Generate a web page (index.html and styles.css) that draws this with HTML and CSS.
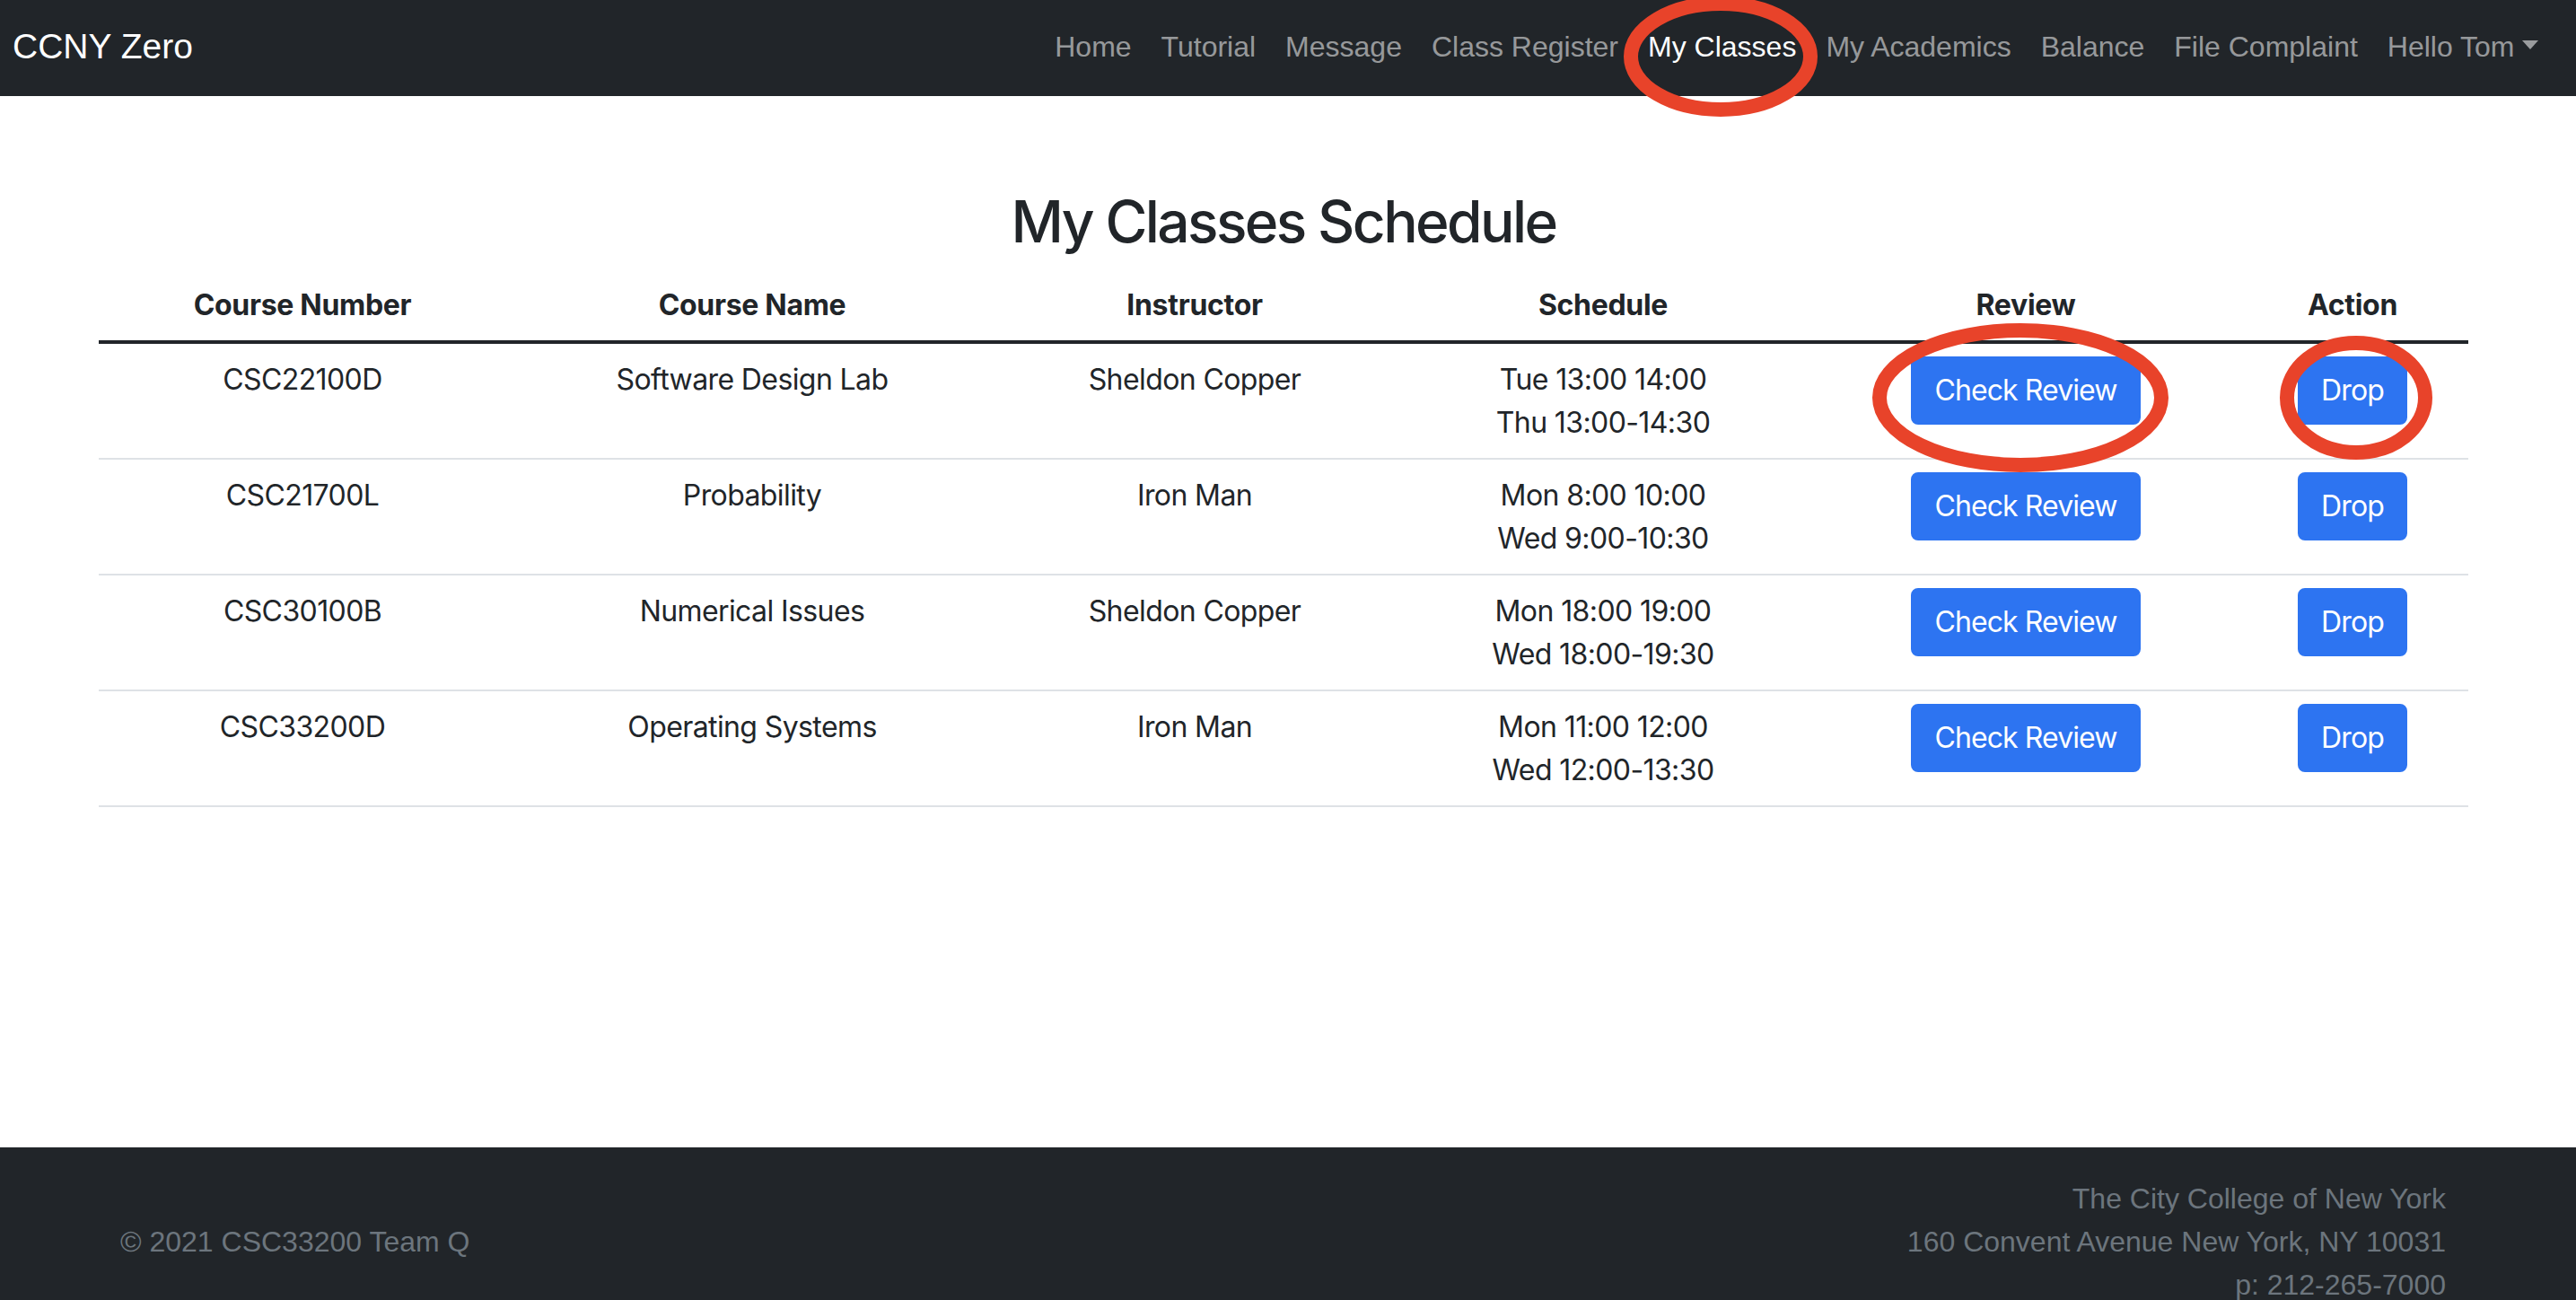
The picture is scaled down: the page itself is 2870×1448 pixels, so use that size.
FILE: index.html
```html
<!DOCTYPE html>
<html lang="en">
<head>
<meta charset="utf-8">
<title>My Classes Schedule</title>
<link rel="stylesheet" href="styles.css">
</head>
<body>
<nav class="navbar">
  <a class="brand" href="#">CCNY Zero</a>
  <ul class="nav">
    <li><a class="nav-link" href="#">Home</a></li>
    <li><a class="nav-link" href="#">Tutorial</a></li>
    <li><a class="nav-link" href="#">Message</a></li>
    <li><a class="nav-link" href="#">Class Register</a></li>
    <li><a class="nav-link active" href="#">My Classes</a></li>
    <li><a class="nav-link" href="#">My Academics</a></li>
    <li><a class="nav-link" href="#">Balance</a></li>
    <li><a class="nav-link" href="#">File Complaint</a></li>
    <li><a class="nav-link dropdown-toggle" href="#">Hello Tom</a></li>
  </ul>
</nav>

<main class="content">
  <h2 class="title">My Classes Schedule</h2>
  <table class="schedule">
    <colgroup>
      <col class="c-num"><col class="c-name"><col class="c-inst"><col class="c-sched"><col class="c-review"><col class="c-action">
    </colgroup>
    <thead>
      <tr><th>Course Number</th><th>Course Name</th><th>Instructor</th><th>Schedule</th><th>Review</th><th>Action</th></tr>
    </thead>
    <tbody>
      <tr>
        <td>CSC22100D</td><td>Software Design Lab</td><td>Sheldon Copper</td>
        <td>Tue 13:00 14:00<br>Thu 13:00-14:30</td>
        <td><button class="btn">Check Review</button></td>
        <td><button class="btn">Drop</button></td>
      </tr>
      <tr>
        <td>CSC21700L</td><td>Probability</td><td>Iron Man</td>
        <td>Mon 8:00 10:00<br>Wed 9:00-10:30</td>
        <td><button class="btn">Check Review</button></td>
        <td><button class="btn">Drop</button></td>
      </tr>
      <tr>
        <td>CSC30100B</td><td>Numerical Issues</td><td>Sheldon Copper</td>
        <td>Mon 18:00 19:00<br>Wed 18:00-19:30</td>
        <td><button class="btn">Check Review</button></td>
        <td><button class="btn">Drop</button></td>
      </tr>
      <tr>
        <td>CSC33200D</td><td>Operating Systems</td><td>Iron Man</td>
        <td>Mon 11:00 12:00<br>Wed 12:00-13:30</td>
        <td><button class="btn">Check Review</button></td>
        <td><button class="btn">Drop</button></td>
      </tr>
    </tbody>
  </table>
</main>

<footer class="footer">
  <div class="footer-inner">
    <p class="copy">© 2021 CSC33200 Team Q</p>
    <address class="address">
      The City College of New York<br>
      160 Convent Avenue New York, NY 10031<br>
      p: 212-265-7000
    </address>
  </div>
</footer>

<svg class="annotations" width="2870" height="1448" viewBox="0 0 2870 1448" aria-hidden="true">
  <ellipse cx="1917" cy="63" rx="100" ry="59" />
  <ellipse cx="2251" cy="443" rx="157" ry="75" />
  <ellipse cx="2625" cy="443" rx="77" ry="61" />
</svg>
</body>
</html>
```

FILE: styles.css
```css
* { box-sizing: border-box; }

html, body {
  margin: 0;
  padding: 0;
  background: #ffffff;
}

body {
  position: relative;
  font-family: Inter, "Noto Sans", sans-serif;
  color: #212529;
  overflow: hidden;
}

/* ---------- navbar ---------- */
.navbar {
  height: 107px;
  background: #212529;
  display: flex;
  align-items: center;
  justify-content: space-between;
  padding: 0 26px 4px 14px;
  font-family: "Liberation Sans", Arial, sans-serif;
}

.brand {
  color: #ffffff;
  font-size: 39px;
  line-height: 60px;
  text-decoration: none;
}

.nav {
  display: flex;
  list-style: none;
  margin: 0;
  padding: 0;
}

.nav-link {
  display: block;
  padding: 0 16.5px;
  font-size: 32px;
  line-height: 48px;
  color: rgba(255, 255, 255, 0.55);
  text-decoration: none;
}

.nav-link.active {
  color: #ffffff;
}

.dropdown-toggle::after {
  content: "";
  display: inline-block;
  margin-left: 8px;
  vertical-align: 8px;
  border-top: 10px solid;
  border-left: 9px solid transparent;
  border-right: 9px solid transparent;
  border-bottom: 0;
}

/* ---------- content ---------- */
.content {
  margin-left: 110px;
  width: 2640px;
  padding-top: 102px;
  padding-bottom: 379px;
}

.title {
  margin: 0 0 14px;
  text-align: center;
  font-size: 64px;
  font-weight: 500;
  line-height: 1.2;
  letter-spacing: -2.6px;
}

.schedule {
  width: 100%;
  border-collapse: collapse;
  table-layout: fixed;
  font-size: 32px;
  line-height: 48px;
  text-align: center;
  letter-spacing: -0.6px;
}

.c-num { width: 454px; }
.c-name { width: 548px; }
.c-inst { width: 438px; }
.c-sched { width: 472px; }
.c-review { width: 470px; }
.c-action { width: 258px; }

.schedule th {
  font-weight: 700;
  padding: 16px 16px 15px;
  border-bottom: 4px solid #212529;
  vertical-align: bottom;
  letter-spacing: -0.3px;
}

.schedule td {
  padding: 16px 16px 15px;
  border-bottom: 2px solid #dee2e6;
  vertical-align: top;
}

.btn {
  font-family: Inter, "Noto Sans", sans-serif;
  font-size: 32px;
  line-height: 48px;
  letter-spacing: -0.9px;
  padding: 12px 24px;
  margin-top: -2px;
  border: 2px solid #2d74f1;
  border-radius: 8px;
  background: #2d74f1;
  color: #ffffff;
  cursor: pointer;
}

/* ---------- footer ---------- */
.footer {
  background: #212529;
  font-family: "Liberation Sans", Arial, sans-serif;
  color: #6c757d;
  font-size: 32px;
  line-height: 48px;
}

.footer-inner {
  display: flex;
  align-items: center;
  justify-content: space-between;
  padding: 33px 145px 33px 134px;
}

.copy {
  margin: 0;
}

.address {
  font-style: normal;
  text-align: right;
}

/* ---------- annotations ---------- */
.annotations {
  position: absolute;
  top: 0;
  left: 0;
  pointer-events: none;
}

.annotations ellipse {
  fill: none;
  stroke: #e8432a;
  stroke-width: 16;
}
```
